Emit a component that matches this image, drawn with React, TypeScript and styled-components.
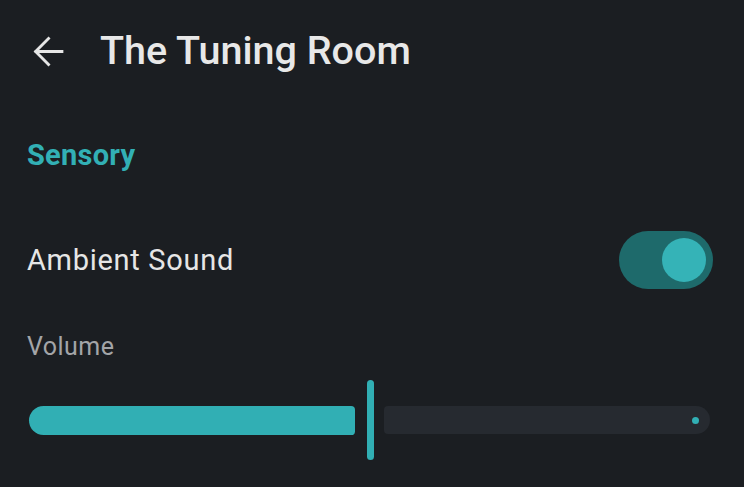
import React from "react";
import styled, { createGlobalStyle } from "styled-components";

const Global = createGlobalStyle`
  html, body { margin: 0; padding: 0; background: #1b1e22; }
  body { font-family: Roboto, "Noto Sans", sans-serif; }
`;

const Page = styled.div`
  width: 744px;
  height: 487px;
  background: #1b1e22;
  display: flex;
  flex-direction: column;
  overflow: hidden;
`;

const Header = styled.header`
  display: flex;
  align-items: center;
  gap: 30px;
  padding: 29.5px 0 0 27px;
`;

const BackButton = styled.button`
  width: 43px;
  height: 43px;
  padding: 0;
  border: none;
  background: none;
  color: #e6e6e6;
  display: flex;
  align-items: center;
  justify-content: center;
`;

const Title = styled.h1`
  margin: 0;
  font-size: 39.5px;
  line-height: 40px;
  font-weight: 500;
  color: #e8e8e8;
`;

const SectionLabel = styled.h2`
  margin: 68px 0 0 27px;
  font-size: 29px;
  line-height: 29px;
  font-weight: 700;
  letter-spacing: 0.25px;
  color: #32b0b5;
`;

const Row = styled.div`
  display: flex;
  align-items: center;
  justify-content: space-between;
  margin-top: 61.5px;
  padding: 0 31px 0 27px;
  height: 58px;
`;

const RowText = styled.span`
  font-size: 29px;
  line-height: 29px;
  color: #e6e6e6;
  letter-spacing: 0.7px;
`;

const Switch = styled.div<{ $on: boolean }>`
  width: 94px;
  height: 58px;
  border-radius: 29px;
  background: ${(p) => (p.$on ? "#1e6a6b" : "#3a3f46")};
  display: flex;
  align-items: center;
  justify-content: ${(p) => (p.$on ? "flex-end" : "flex-start")};
  padding: 0 7px;
  box-sizing: border-box;
`;

const Thumb = styled.div`
  width: 44px;
  height: 44px;
  border-radius: 50%;
  background: #35b3b7;
`;

const FieldLabel = styled.div`
  margin: 45px 0 0 27px;
  font-size: 25px;
  line-height: 25px;
  letter-spacing: 0.45px;
  color: #a3a5a8;
`;

const Slider = styled.div`
  display: flex;
  align-items: center;
  margin-top: 21px;
  padding: 0 34px 0 29px;
  height: 80px;
`;

const ActiveTrack = styled.div`
  height: 29px;
  background: #31afb4;
  border-radius: 15px 4px 4px 15px;
`;

const Handle = styled.div`
  width: 7px;
  height: 80px;
  border-radius: 4px;
  background: #31afb4;
  margin: 0 10px 0 12px;
`;

const InactiveTrack = styled.div`
  flex: 1;
  height: 28px;
  background: #262a30;
  border-radius: 4px 14px 14px 4px;
  display: flex;
  align-items: center;
  justify-content: flex-end;
  padding-right: 11px;
`;

const StopDot = styled.div`
  width: 7px;
  height: 7px;
  border-radius: 50%;
  background: #31afb4;
`;

export default function App() {
  const value = 0.5;
  return (
    <Page>
      <Global />
      <Header>
        <BackButton aria-label="Back">
          <svg width="43" height="43" viewBox="0 0 24 24" fill="none">
            <path
              d="M19.5 12H5M12 4.8 4.8 12l7.2 7.2"
              stroke="currentColor"
              strokeWidth="1.6"
              strokeLinecap="square"
            />
          </svg>
        </BackButton>
        <Title>The Tuning Room</Title>
      </Header>
      <SectionLabel>Sensory</SectionLabel>
      <Row>
        <RowText>Ambient Sound</RowText>
        <Switch $on>
          <Thumb />
        </Switch>
      </Row>
      <FieldLabel>Volume</FieldLabel>
      <Slider>
        <ActiveTrack style={{ width: `${326 * (value / 0.5)}px` }} />
        <Handle />
        <InactiveTrack>
          <StopDot />
        </InactiveTrack>
      </Slider>
    </Page>
  );
}
